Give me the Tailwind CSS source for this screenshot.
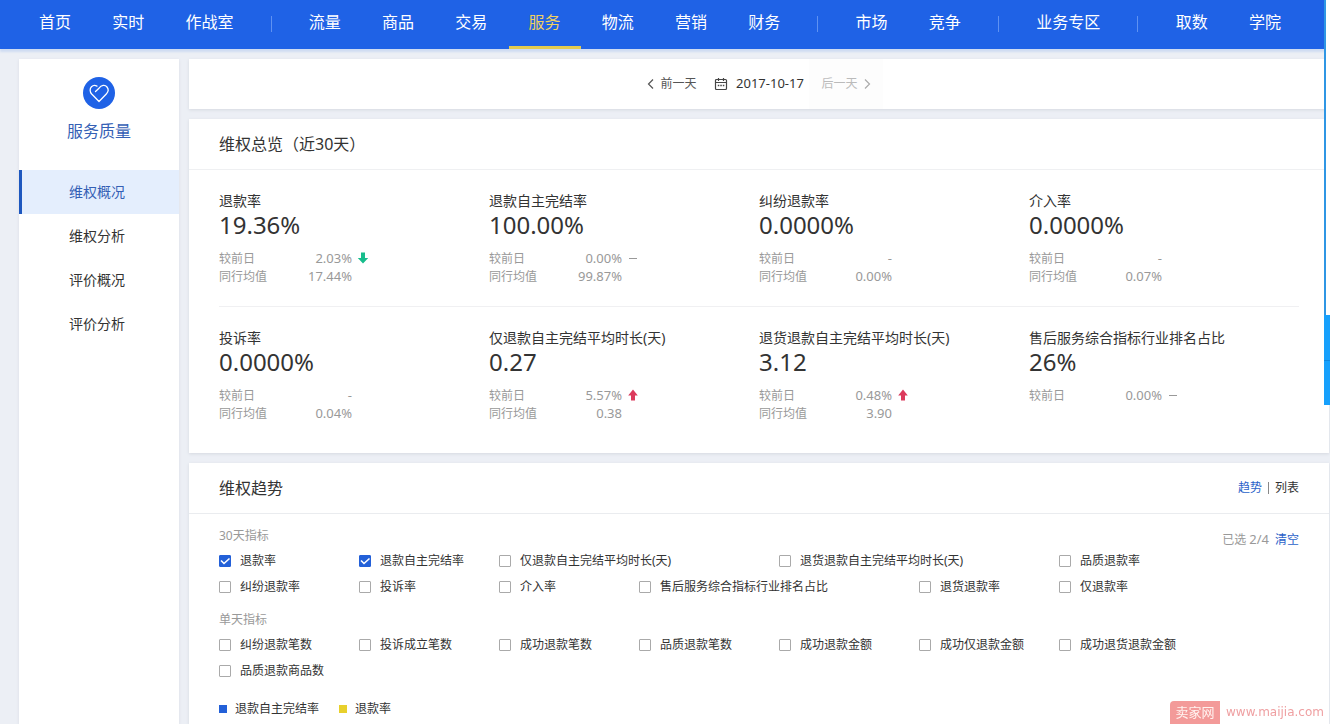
<!DOCTYPE html>
<html lang="zh-CN">
<head>
<meta charset="utf-8">
<title>服务质量 - 维权概况</title>
<script src="https://cdn.jsdelivr.net/npm/@tailwindcss/browser@4"></script>
</head>
<body class="flex min-h-screen flex-col bg-[#eceff5] font-['Noto_Sans','Noto_Sans_CJK_SC',sans-serif] text-xs text-[#333]">
<header class="relative z-10 bg-[#1f62e6] pr-[29px] pl-[19px] shadow-[0_3px_2px_#cfdcf2]">
  <nav id="nav" class="flex h-[49px] items-stretch justify-between text-base leading-[44px] whitespace-nowrap text-white"></nav>
</header>

<div class="flex flex-1 gap-2.5 pt-2.5 pr-px pl-[19px]">
  <aside class="w-40 shrink-0 bg-white shadow-[0_1px_3px_#d9dde5]">
    <div class="flex h-[111px] flex-col items-center pt-[18px]">
      <svg class="size-8" viewBox="0 0 32 32" fill="none"><circle cx="16" cy="16" r="16" fill="#1f62e6"/><path d="M12.500 14.500 16 11.200C18.300 8 22 7.500 24 10c1.900 2.400 1.200 5-.7 7L16 24.500 8.700 17C6.600 14.700 6.700 11.500 8.500 9.700c1.700-1.700 3.700-1.600 5.500-.6" stroke="#fff" stroke-width="1.300" stroke-linecap="round" stroke-linejoin="round"/></svg>
      <h2 class="mt-2.5 text-base leading-6 text-[#3460b5]">服务质量</h2>
    </div>
    <nav class="flex flex-col text-sm leading-[44px]">
      <a href="#" class="border-l-[3px] border-[#1d57bf] bg-[#e4eefd] pl-[47px] text-[#3460b5]">维权概况</a>
      <a href="#" class="pl-[50px]">维权分析</a>
      <a href="#" class="pl-[50px]">评价概况</a>
      <a href="#" class="pl-[50px]">评价分析</a>
    </nav>
  </aside>

  <main class="flex min-w-0 flex-1 flex-col gap-2.5">
    <section class="flex h-[50px] items-stretch justify-center bg-white shadow-[0_1px_3px_#d5d9e0]">
      <button class="flex w-[74px] items-center justify-center gap-1.5 text-[#555]">
        <svg class="h-3 w-[7px]" viewBox="0 0 7 12" fill="none" stroke="#555" stroke-width="1.200"><path d="M6 1.500 1.500 6 6 10.500"/></svg>前一天
      </button>
      <button class="flex w-[100px] items-center justify-center gap-2 text-[13px]">
        <svg class="size-3.5" viewBox="0 0 14 14" fill="none" stroke="#444" stroke-width="1.200"><rect x="1.500" y="2.500" width="11" height="10" rx="1"/><path d="M1.500 5.500h11M4.500 1v3M9.500 1v3"/><path d="M3.800 8.500h1.500m1 0h1.500m1 0h1.500" stroke-width="1.500"/></svg>2017-10-17
      </button>
      <button disabled class="flex w-[74px] items-center justify-center gap-1.5 bg-[#fdfdfd] text-[#bbb]">
        后一天<svg class="h-3 w-[7px]" viewBox="0 0 7 12" fill="none" stroke="#aaa" stroke-width="1.200"><path d="M1 1.500 5.500 6 1 10.500"/></svg>
      </button>
    </section>

    <section class="bg-white pb-2.5 shadow-[0_1px_3px_#d5d9e0]">
      <h3 class="border-b border-[#eff0f2] px-[30px] text-base leading-[50px]">维权总览（近30天）</h3>
      <div id="metrics" class="px-[30px]"></div>
    </section>

    <section class="flex-1 bg-white px-[30px] shadow-[0_1px_3px_#d5d9e0]">
      <div class="-mx-[30px] flex items-center justify-between border-b border-[#eaecef] px-[30px] leading-[50px]">
        <h3 class="text-base leading-[50px]">维权趋势</h3>
        <div class="flex items-center gap-1.5"><a href="#" class="text-[#2b62c9]">趋势</a><span class="h-3 w-px bg-[#888]"></span><a href="#">列表</a></div>
      </div>
      <div class="flex h-[34px] items-start justify-between pt-[13px] leading-[18px] text-[#999]">
        <h4>30天指标</h4>
        <p class="flex gap-1.5 pt-[3px]"><span>已选 <span class="text-[13px]">2/4</span></span><button class="text-[#2b62c9]">清空</button></p>
      </div>
      <div id="month" class="grid grid-cols-[repeat(auto-fill,140px)]"></div>
      <h4 class="mt-[11px] mb-[3px] leading-[18px] text-[#999]">单天指标</h4>
      <div id="day" class="grid grid-cols-[repeat(auto-fill,140px)]"></div>
      <ul class="mt-4 flex gap-5 leading-[18px]">
        <li class="flex items-center gap-2"><span class="size-2 bg-[#2360d8]"></span>退款自主完结率</li>
        <li class="flex items-center gap-2"><span class="size-2 bg-[#e8d02c]"></span>退款率</li>
      </ul>
    </section>
  </main>
</div>

<!-- docked side panel, collapsed at the window's right edge -->
<aside class="fixed top-0 right-0 z-20 w-1.5">
  <div class="h-[315px] border-l-2 border-[#2f96e4] bg-white"></div>
  <div class="h-[46px] border-b border-[#0d87e0] bg-[#16a0fc]"></div>
  <div class="h-11 bg-[#16a0fc]"></div>
</aside>
<a href="#" class="fixed right-[6px] bottom-0 z-20 flex items-center gap-1.5 leading-[23px] text-[#efa0a2]"><span class="w-[50px] rounded-tl-sm bg-[#f39a99] text-center text-[13px] text-[#fff3f0]">卖家网</span><span class="font-['DejaVu_Sans',sans-serif]">www.maijia.com</span></a>

<script>
const navItems = ['首页','实时','作战室','|','流量','商品','交易','服务','物流','营销','财务','|','市场','竞争','|','业务专区','|','取数','学院'];
document.getElementById('nav').innerHTML = navItems.map(t =>
  t === '|' ? '<span class="mx-4 mt-4 h-4 w-px bg-[#5f92f2]"></span>'
  : t === '服务' ? '<a href="#" class="border-b-3 border-[#e3cb4f] px-5 text-[#f0d060]">服务</a>'
  : `<a href="#" class="px-5">${t}</a>`).join('');

const icons = {
  down: '<svg class="size-3" viewBox="0 0 12 12" fill="#17bd8c"><path d="M4 .500h4v5.500h3.200L6 11.500.800 6H4z"/></svg>',
  up: '<svg class="size-3" viewBox="0 0 12 12" fill="#dc3a5c"><path d="M4 11.500h4V6.500h2.800L6 .500 1.200 6.500H4z"/></svg>',
  flat: '<svg class="size-3" viewBox="0 0 12 12" fill="#999"><path d="M2 6h8v1H2z"/></svg>',
  none: ''
};
const metrics = [
  [['退款率','19.36%','2.03%','down','17.44%'],['退款自主完结率','100.00%','0.00%','flat','99.87%'],['纠纷退款率','0.0000%','-','none','0.00%'],['介入率','0.0000%','-','none','0.07%']],
  [['投诉率','0.0000%','-','none','0.04%'],['仅退款自主完结平均时长(天)','0.27','5.57%','up','0.38'],['退货退款自主完结平均时长(天)','3.12','0.48%','up','3.90'],['售后服务综合指标行业排名占比','26%','0.00%','flat',null]]
];
document.getElementById('metrics').innerHTML = metrics.map(row =>
  '<div class="grid grid-cols-4 border-[#f0f0f2] py-[21px] not-last:border-b">' + row.map(([name, value, diff, icon, avg]) => `
    <div><h4 class="text-sm leading-5">${name}</h4><p class="text-2xl leading-7">${value}</p>
    <dl class="mt-2.5 leading-[18px] text-[#999]">
      <div class="flex h-[18px] items-baseline"><dt class="w-16">较前日</dt><dd class="w-[69px] text-right text-[13px]">${diff}</dd><dd class="self-center pl-[5px]">${icons[icon]}</dd></div>
      ${avg ? `<div class="flex h-[18px] items-baseline"><dt class="w-16">同行均值</dt><dd class="w-[69px] text-right text-[13px]">${avg}</dd></div>` : ''}
    </dl></div>`).join('') + '</div>').join('');

const check = ([name, wide, on]) => `<label class="flex h-[26px] items-center gap-[9px] whitespace-nowrap ${wide ? 'col-span-2' : ''}">
  <span class="relative size-3"><input type="checkbox" ${on ? 'checked' : ''} class="peer block size-3 appearance-none rounded-[1px] border border-[#aaa] bg-white checked:border-[#2360d8] checked:bg-[#2360d8]"><svg class="pointer-events-none absolute inset-0 hidden size-3 peer-checked:block" viewBox="0 0 12 12" fill="none" stroke="#fff" stroke-width="1.600"><path d="M2 5.500 5 8.500 10.500 3.500"/></svg></span>${name}</label>`;
document.getElementById('month').innerHTML = [['退款率',0,1],['退款自主完结率',0,1],['仅退款自主完结平均时长(天)',1],['退货退款自主完结平均时长(天)',1],['品质退款率'],['纠纷退款率'],['投诉率'],['介入率'],['售后服务综合指标行业排名占比',1],['退货退款率'],['仅退款率']].map(check).join('');
document.getElementById('day').innerHTML = [['纠纷退款笔数'],['投诉成立笔数'],['成功退款笔数'],['品质退款笔数'],['成功退款金额'],['成功仅退款金额'],['成功退货退款金额'],['品质退款商品数']].map(check).join('');
</script>
</body>
</html>
